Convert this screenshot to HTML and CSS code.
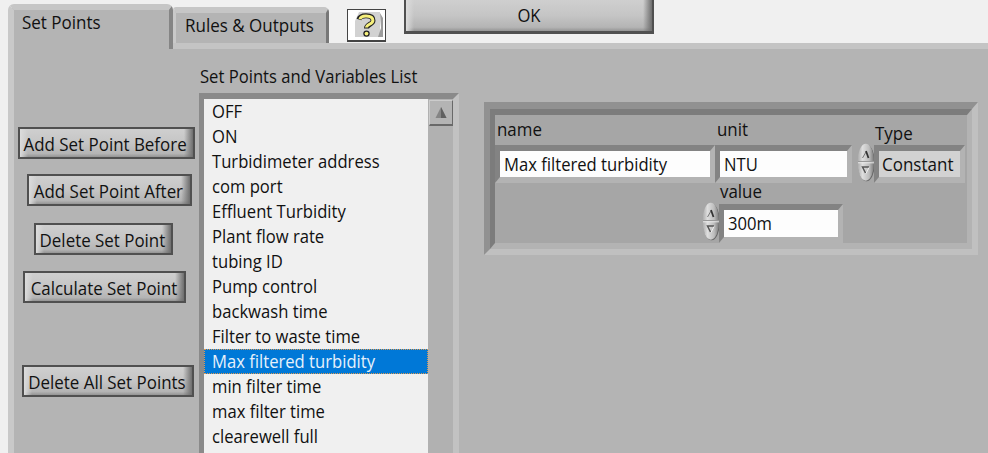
FILE: index.html
```html
<!DOCTYPE html>
<html lang="en">
<head>
<meta charset="utf-8">
<title>Set Points</title>
<link rel="stylesheet" href="styles.css">
</head>
<body>
<header class="topbar">
  <div class="tab tab-active"><span class="t">Set Points</span></div>
  <div class="tab tab-rules"><span class="t">Rules &amp; Outputs</span></div>
  <button class="help" aria-label="Help">
    <svg width="37" height="30" viewBox="0 0 37 30">
      <path d="M7 11 11 2H32V27H7Z" fill="#d2d2d2"/><path d="M32 3 35 8V27H30L33 18Z" fill="#9c9c9c"/>
      <path d="M11 9.500C12 6 14.500 5.800 18 5.800C22 5.800 25 7 25 10.500C25 14.500 18.500 14 18.500 18.500" fill="none" stroke="#222" stroke-width="5"/>
      <circle cx="18.500" cy="23.600" r="3.200" fill="#222"/>
      <path d="M12 9.200C12.500 6.500 14.500 5.900 18 5.900C22 5.900 24.900 7 24.900 10.500C24.900 14.500 18.500 14 18.500 17.600" fill="none" stroke="#f6f07c" stroke-width="3"/>
      <circle cx="18.500" cy="23.600" r="1.900" fill="#f6f07c"/>
    </svg>
  </button>
  <button class="btn ok"><span class="t">OK</span></button>
</header>
<main class="page">
  <nav class="actions">
    <button class="btn before"><span class="t">Add Set Point Before</span></button>
    <button class="btn after"><span class="t">Add Set Point After</span></button>
    <button class="btn delete"><span class="t">Delete Set Point</span></button>
    <button class="btn calc"><span class="t">Calculate Set Point</span></button>
    <button class="btn delete-all"><span class="t">Delete All Set Points</span></button>
  </nav>
  <section class="list-area">
    <h1 class="caption"><span class="t">Set Points and Variables List</span></h1>
    <div class="listbox">
      <ul class="rows">
        <li><span class="t">OFF</span></li>
        <li><span class="t">ON</span></li>
        <li><span class="t">Turbidimeter address</span></li>
        <li><span class="t">com port</span></li>
        <li><span class="t">Effluent Turbidity</span></li>
        <li><span class="t">Plant flow rate</span></li>
        <li><span class="t">tubing ID</span></li>
        <li><span class="t">Pump control</span></li>
        <li><span class="t">backwash time</span></li>
        <li><span class="t">Filter to waste time</span></li>
        <li class="selected"><span class="t">Max filtered turbidity</span></li>
        <li><span class="t">min filter time</span></li>
        <li><span class="t">max filter time</span></li>
        <li><span class="t">clearewell full</span></li>
      </ul>
      <div class="scrollbar"><div class="scroll-up">
        <svg width="12" height="12" viewBox="0 0 12 12"><path d="M6 0 11.500 11H.5Z" fill="#858585"/><path d="M6 0 11.500 11H6Z" fill="#606060"/></svg>
      </div></div>
    </div>
  </section>
  <section class="cluster">
    <div class="cluster-inner">
    <div class="line">
      <div class="field name"><label><span class="t">name</span></label><div class="box"><span class="t">Max filtered turbidity</span></div></div>
      <div class="field unit"><label><span class="t">unit</span></label><div class="box"><span class="t">NTU</span></div></div>
      <svg class="spin" width="18" height="39" viewBox="0 0 18 39">
        <defs><linearGradient id="knob"><stop offset="0" stop-color="#a8a8a8"/><stop offset=".3" stop-color="#dedede"/><stop offset=".7" stop-color="#bdbdbd"/><stop offset="1" stop-color="#787878"/></linearGradient></defs>
        <ellipse cx="9.500" cy="20" rx="8.400" ry="18.300" fill="#666"/><ellipse cx="8.800" cy="19.200" rx="8.300" ry="18.500" fill="url(#knob)"/>
        <path d="M1 18.500H17" stroke="#999"/><path d="M1 19.800H17" stroke="#e8e8e8"/>
        <path d="M5.500 15 9 9" stroke="#777"/><path d="M9 8 11.500 15" stroke="#333" stroke-width="1.800"/>
        <path d="M12 24H5.500L8.500 30" fill="none" stroke="#555" stroke-width="1.500"/><path d="M12 24.500 9 30.500" stroke="#eee"/>
      </svg>
      <div class="field type"><label><span class="t">Type</span></label><div class="box"><span class="t">Constant</span></div></div>
    </div>
    <div class="line second">
      <svg class="spin" width="18" height="39" viewBox="0 0 18 39">
        <ellipse cx="9.500" cy="20" rx="8.400" ry="18.300" fill="#666"/><ellipse cx="8.800" cy="19.200" rx="8.300" ry="18.500" fill="url(#knob)"/>
        <path d="M1 18.500H17" stroke="#999"/><path d="M1 19.800H17" stroke="#e8e8e8"/>
        <path d="M5.500 15 9 9" stroke="#777"/><path d="M9 8 11.500 15" stroke="#333" stroke-width="1.800"/>
        <path d="M12 24H5.500L8.500 30" fill="none" stroke="#555" stroke-width="1.500"/><path d="M12 24.500 9 30.500" stroke="#eee"/>
      </svg>
      <div class="field value"><label><span class="t">value</span></label><div class="box"><span class="t">300m</span></div></div>
    </div>
    </div>
  </section>
</main>
</body>
</html>
```
FILE: styles.css
```css
* { box-sizing: border-box; }
body {
  margin: 0;
  width: 988px;
  height: 453px;
  overflow: hidden;
  background: #f0f0f0;
  color: #111;
  font: 18.7px/25px "Open Sans", "Noto Sans", sans-serif;
}
button { font: inherit; color: inherit; padding: 0; border: 0; }
.t { display: inline-block; white-space: nowrap; transform: translateY(-1px) scaleX(.89); transform-origin: left center; }

.topbar { display: flex; align-items: flex-start; height: 43px; padding-left: 8px; }
.tab { background: #b4b4b4; border-style: solid; border-color: #c6c6c6 #777 #b4b4b4 #c9c9c9; }
.tab .t { transform: translateY(-1px) scaleX(.91); }
.tab-active {
  width: 165px; height: 45px; margin-top: 4px; padding: 0 0 0 8px;
  border-width: 6px 4px 0 6px; border-radius: 6px 6px 0 0;
  border-right-color: #858585;
  position: relative; z-index: 1;
}
.tab-rules {
  width: 156px; height: 36px; margin-top: 7px; padding: 0 0 0 9px;
  border-width: 6px 3px 0 3px; border-radius: 3px 5px 0 0;
}
.help {
  width: 39px; height: 33px; margin: 9px 0 0 18px;
  border: 1px solid #444; border-bottom-width: 2px; background: #fff; line-height: 0;
}
.btn {
  display: flex; align-items: center; justify-content: center;
  height: 32px;
  border: 2px solid #505050;
  background:
    linear-gradient(90deg, #dcdcdc, rgb(220 220 220 / 0) 8px, rgb(110 110 110 / 0) calc(100% - 9px), #6e6e6e),
    linear-gradient(#cfcfcf, #c5c5c5 50%, #b4b4b4 88%, #949494 100%);
}
.btn .t { transform: translate(-1px, 0) scaleX(.905); transform-origin: center; }
.ok { width: 250px; height: 34px; margin-left: 18px; border-top: 0; border-bottom-width: 3px; }
.btn.ok .t { transform: scaleX(.89); margin-top: -2px; }

.page {
  display: flex; align-items: flex-start;
  width: 980px; height: 410px; margin-left: 8px;
  background: #b4b4b4;
  border-top: 6px solid #c4c4c4; border-left: 6px solid #c9c9c9;
}
.actions { width: 185px; padding-top: 78px; flex: none; }
.before { width: 177px; margin-left: 4px; }
.after { width: 165px; margin: 15px 0 0 13px; }
.delete { width: 139px; margin: 17px 0 0 20px; }
.calc { width: 163px; margin: 16px 0 0 9px; }
.delete-all { width: 172px; margin: 62px 0 0 8px; }

.list-area { width: 260px; flex: none; padding-top: 15px; }
.caption { margin: 0 0 4px 1px; font: inherit; }
.listbox {
  display: flex; height: 370px;
  border: solid; border-width: 6px 6px 0 5px;
  border-color: #8a8a8a #c2c2c2 #c2c2c2 #8a8a8a;
}
.rows { width: 224px; margin: 0; padding: 0; list-style: none; background: #f0f0f0; }
.rows li { height: 25px; padding-left: 8px; }
.rows .selected { background: #0078d7; color: #e6f1fb; outline: 1px dotted #e09a50; outline-offset: -1px; }
.scrollbar { width: 25px; padding: 1px 0 0 1px; background: #b1b1b1; }
.scroll-up {
  display: flex; align-items: center; justify-content: center;
  width: 24px; height: 26px; background: #b4b4b4;
  border: 1px solid #ccc; border-right: 1px solid #696969; border-bottom: 2px solid #696969;
}

.cluster {
  width: 494px; height: 153px; margin: 53px 0 0 25px;
  border: solid; border-width: 7px 6px 6px 6px;
  border-color: #919191 #c0c0c0 #c0c0c0 #919191;
}
.cluster-inner {
  height: 140px; background: #a6a6a6;
  border: solid; border-width: 6px 5px;
  border-color: #7c7c7c #b3b3b3 #b3b3b3 #7c7c7c;
}
.line { display: flex; align-items: flex-end; height: 69px; }
.second { height: 59px; padding-left: 207px; }
.field label { display: block; height: 25px; }
.field label .t { transform: translateY(-1.5px) scaleX(.905); }
.box {
  display: flex; align-items: center;
  height: 38px; padding-left: 4px; background: #fdfdfd;
  border: solid; border-width: 6px 5px;
  border-color: #838383 #b3b3b3 #b3b3b3 #838383;
}
.name { width: 220px; }
.name label { padding-left: 2px; margin-bottom: 3px; }
.name .box { margin-bottom: 1px; }
.unit { width: 137px; }
.unit label { padding-left: 2px; margin-bottom: 3px; }
.unit .box { margin-bottom: 1px; }
.spin { flex: none; margin-bottom: 2px; }
.line:first-child .spin { margin-left: 5px; }
.type { width: 91px; margin-left: -1px; }
.type label { padding-left: 1px; margin-bottom: -1px; }
.type .box { margin-bottom: 1px; background: #d2d2d2; padding-left: 3px; }
.type .box .t { transform: translateY(-1px) scaleX(.91); }
.value { width: 124px; margin-left: -1px; }
.value label { padding-left: 1px; }
.value .box { height: 39px; }
```
